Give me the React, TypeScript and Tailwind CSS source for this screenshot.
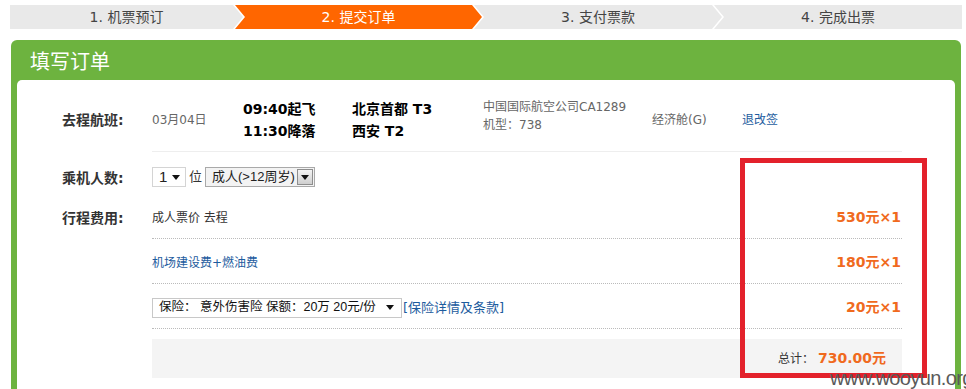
const font = "font-['DejaVu_Sans','Noto_Sans_CJK_SC',sans-serif]";
const selectFont = "font-['Liberation_Sans','Noto_Sans_CJK_SC',sans-serif]";

const Step = ({ label, active, shape, first }: { label: string; active?: boolean; shape: string; first?: boolean }) => (
  <div
    className={`h-[24px] flex items-center justify-center text-[14px] ${first ? '' : 'ml-[-8px]'} ${active ? 'bg-[#ff6600] text-white' : 'bg-[#e9e9e9] text-[#444]'} ${shape}`}
  >
    {label}
  </div>
);

const FeeRow = ({ children, amount }: { children: React.ReactNode; amount: string }) => (
  <div className="h-[45px] pt-[3px] flex items-center justify-between border-b border-dotted border-[#bbb]">
    <div className="flex items-center">{children}</div>
    <span className="text-[14px] font-bold text-[#f06a1e] pr-[1px]">{amount}</span>
  </div>
);

const Arrow = () => (
  <svg width="8" height="5" viewBox="0 0 8 5" className="shrink-0">
    <path d="M0 0h8L4 5z" fill="#111" />
  </svg>
);

export default function App() {
  return (
    <div className={`relative w-[966px] h-[389px] overflow-hidden bg-white ${font}`}>
      {/* steps */}
      <div className="flex pt-[5px] pl-[10px] h-[30px]">
        <Step first label="1. 机票预订" shape="w-[233px] [clip-path:polygon(0_0,calc(100%_-_10px)_0,100%_50%,calc(100%_-_10px)_100%,0_100%)]" />
        <Step active label="2. 提交订单" shape="w-[247px] [clip-path:polygon(0_0,calc(100%_-_10px)_0,100%_50%,calc(100%_-_10px)_100%,0_100%,10px_50%)]" />
        <Step label="3. 支付票款" shape="w-[248px] [clip-path:polygon(0_0,calc(100%_-_10px)_0,100%_50%,calc(100%_-_10px)_100%,0_100%,10px_50%)]" />
        <Step label="4. 完成出票" shape="w-[248px] [clip-path:polygon(0_0,100%_0,100%_100%,0_100%,10px_50%)]" />
      </div>

      {/* panel */}
      <div className="ml-[11px] mt-[10px] w-[950px] h-[349px] bg-[#6db33f] rounded-t-[6px] flex flex-col">
        <div className="h-[40px] pl-[19px] pt-[1px] flex items-center text-[20px] text-white font-['Noto_Sans_CJK_SC',sans-serif]">填写订单</div>
        <div className="mx-[6px] flex-1 bg-white rounded-t-[5px] pl-[45px] text-[12px] text-[#333]">
          {/* flight */}
          <div className="flex pt-[18px]">
            <div className="w-[90px] h-[44px] flex items-center text-[14px] font-bold">去程航班:</div>
            <div className="w-[750px] h-[54px] border-b border-[#eee]">
              <div className="h-[44px] flex items-center">
                <div className="w-[91px] text-[#666]">03月04日</div>
                <div className="w-[109px] text-[14px] font-bold text-black leading-[22px]">
                  <div>09:40起飞</div>
                  <div>11:30降落</div>
                </div>
                <div className="w-[131px] text-[14px] font-bold text-black leading-[22px]">
                  <div>北京首都 T3</div>
                  <div>西安 T2</div>
                </div>
                <div className="w-[169px] text-[#666] leading-[18px] mb-[8px]">
                  <div>中国国际航空公司CA1289</div>
                  <div>机型：738</div>
                </div>
                <div className="w-[90px] text-[#666]">经济舱(G)</div>
                <div className="text-[#1d5c9e]">退改签</div>
              </div>
            </div>
          </div>

          {/* passengers */}
          <div className="flex items-center h-[42px] pt-[8px]">
            <div className="w-[90px] text-[14px] font-bold pt-[3px]">乘机人数:</div>
            <div className={`flex items-center text-[14px] text-[#222] ${selectFont}`}>
              <div className="w-[34px] h-[20px] border border-[#d4d4d4] flex items-center justify-between pl-[6px] pr-[5px] text-[15px]">
                <span>1</span>
                <Arrow />
              </div>
              <span className="mx-[3px] text-[13px] text-[#333]">位</span>
              <div className="w-[110px] h-[20px] border border-[#a9a9a9] bg-[#f3f3f3] flex items-center justify-between pl-[6px] pr-[1px] text-[13px] whitespace-nowrap">
                <span>成人(&gt;12周岁)</span>
                <div className="w-[16px] h-[16px] shrink-0 border border-[#8e8e8e] bg-gradient-to-b from-[#f4f4f4] to-[#cfcfcf] flex items-center justify-center">
                  <Arrow />
                </div>
              </div>
            </div>
          </div>

          {/* fees */}
          <div className="flex">
            <div className="w-[90px] h-[45px] pt-[3px] flex items-center text-[14px] font-bold">行程费用:</div>
            <div className="w-[750px]">
              <FeeRow amount="530元×1">
                <span className="text-[#333]">成人票价 去程</span>
              </FeeRow>
              <FeeRow amount="180元×1">
                <span className="text-[#1d5c9e]">机场建设费+燃油费</span>
              </FeeRow>
              <FeeRow amount="20元×1">
                <div className={`w-[250px] h-[20px] border border-[#c8c8c8] flex items-center justify-between pl-[6px] pr-[7px] text-[13px] text-[#111] whitespace-nowrap ${selectFont}`}>
                  <span className="text-[12.5px]">保险：&nbsp;意外伤害险 保额：20万 20元/份</span>
                  <Arrow />
                </div>
                <span className="text-[13px] text-[#1d5c9e] ml-[1px] whitespace-nowrap">[保险详情及条款]</span>
              </FeeRow>
              <div className="mt-[10px] h-[39px] bg-[#f4f4f4] flex items-center justify-end pr-[16px]">
                <span className="text-[#333]">总计：</span>
                <span className="text-[14px] font-bold text-[#f06a1e] ml-[4px]">730.00元</span>
              </div>
            </div>
          </div>
        </div>
      </div>

      {/* annotation */}
      <div className="absolute left-[740px] top-[158px] w-[187px] h-[220px] border-[5px] border-[#e3212b]" />
      <div className="absolute left-[830px] top-[366px] text-[20px] leading-[24px] tracking-[-0.6px] text-[#5a5a5a] font-['Liberation_Sans',sans-serif]">
        www.wooyun.org
      </div>
    </div>
  );
}
